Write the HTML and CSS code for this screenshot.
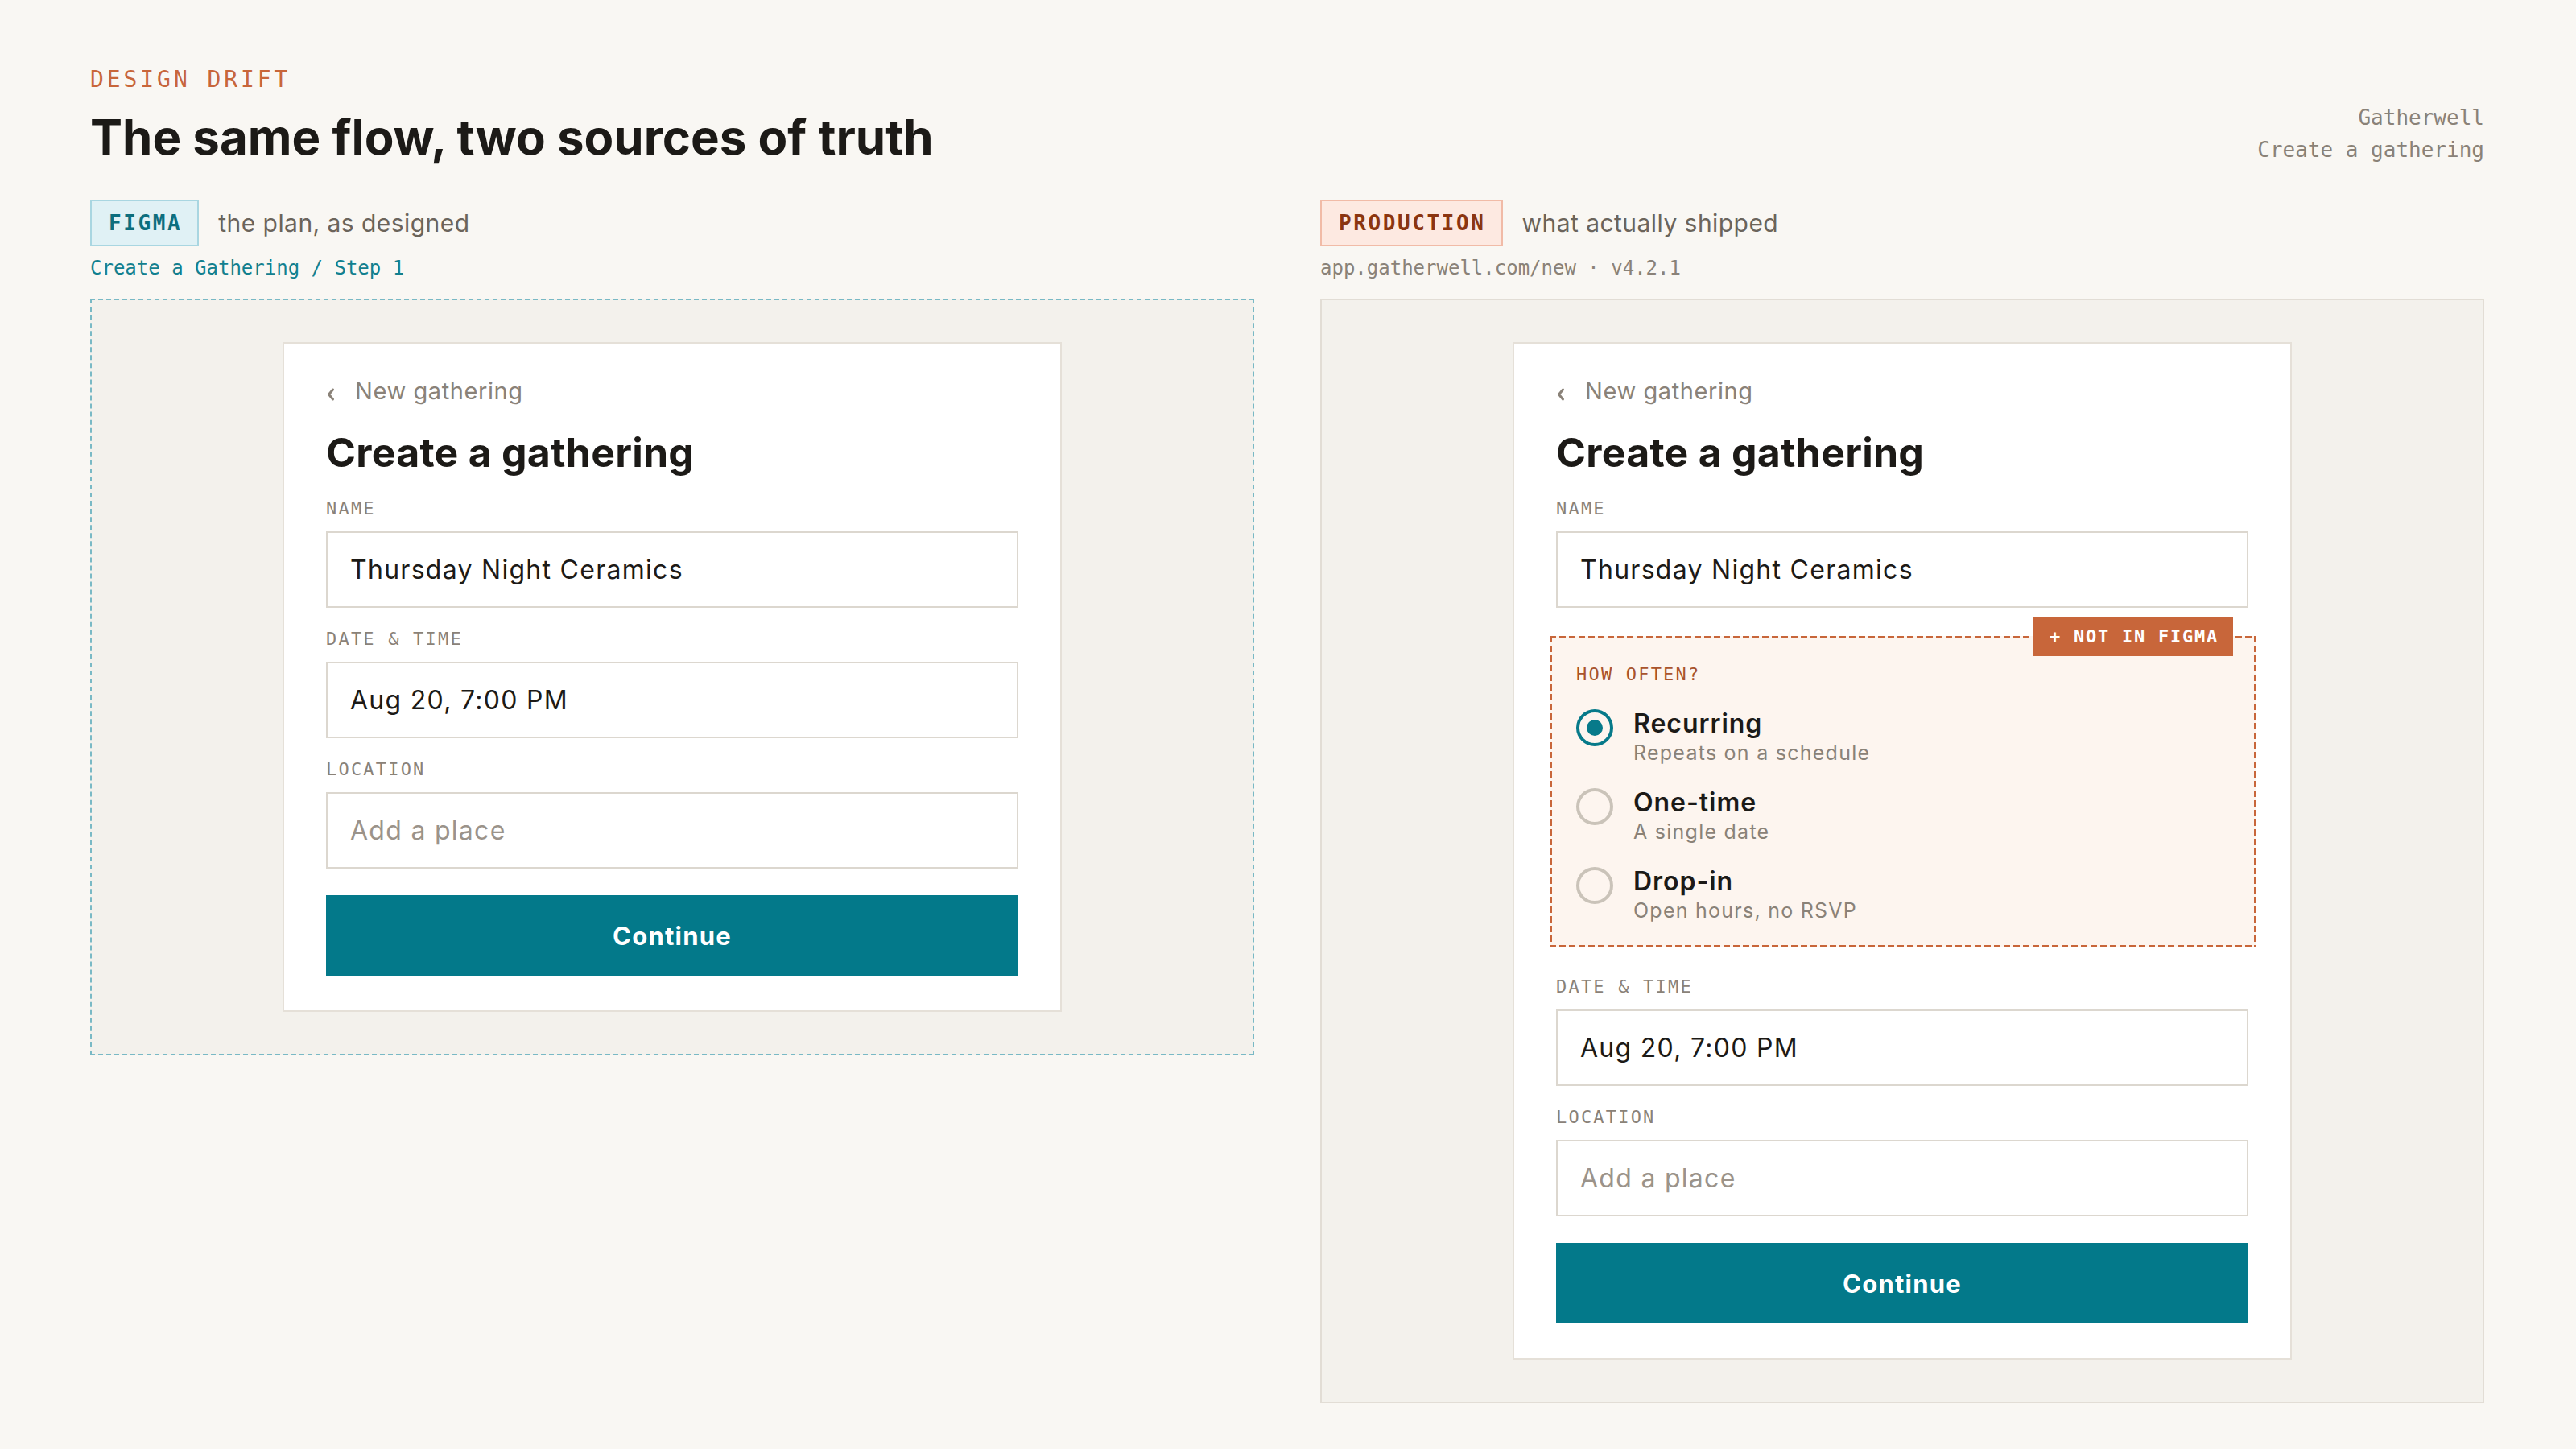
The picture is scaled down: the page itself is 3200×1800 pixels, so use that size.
FILE: index.html
```html
<!DOCTYPE html>
<html lang="en">
<head>
<meta charset="utf-8">
<title>Design drift — Create a gathering</title>
<link rel="stylesheet" href="styles.css">
</head>
<body>
<div class="page">
  <header class="top">
    <div class="top-main">
      <div class="eyebrow">Design drift</div>
      <h1 class="headline">The same flow, two sources of truth</h1>
    </div>
    <div class="meta">Gatherwell<br>Create a gathering</div>
  </header>

  <main class="compare">
    <!-- Design file -->
    <section class="column">
      <div class="source">
        <span class="tag tag-figma">FIGMA</span>
        <span class="source-note">the plan, as designed</span>
      </div>
      <div class="source-path path-figma">Create a Gathering / Step 1</div>
      <div class="stage stage-figma">
        <div class="screen">
          <div class="back">
            <svg class="back-icon" width="12" height="18" viewBox="0 0 12 18" aria-hidden="true"><path d="M8.5 3 L3.5 9 L8.5 15" fill="none" stroke="#8a8278" stroke-width="3" stroke-linecap="round" stroke-linejoin="round"/></svg>
            <span>New gathering</span>
          </div>
          <h2 class="screen-title">Create a gathering</h2>
          <div class="field">
            <div class="field-label">Name</div>
            <div class="input">Thursday Night Ceramics</div>
          </div>
          <div class="field">
            <div class="field-label">Date &amp; time</div>
            <div class="input">Aug 20, 7:00 PM</div>
          </div>
          <div class="field">
            <div class="field-label">Location</div>
            <div class="input input-empty">Add a place</div>
          </div>
          <button class="primary" type="button">Continue</button>
        </div>
      </div>
    </section>

    <!-- Live build -->
    <section class="column">
      <div class="source">
        <span class="tag tag-prod">PRODUCTION</span>
        <span class="source-note">what actually shipped</span>
      </div>
      <div class="source-path path-prod">app.gatherwell.com/new · v4.2.1</div>
      <div class="stage stage-prod">
        <div class="screen">
          <div class="back">
            <svg class="back-icon" width="12" height="18" viewBox="0 0 12 18" aria-hidden="true"><path d="M8.5 3 L3.5 9 L8.5 15" fill="none" stroke="#8a8278" stroke-width="3" stroke-linecap="round" stroke-linejoin="round"/></svg>
            <span>New gathering</span>
          </div>
          <h2 class="screen-title">Create a gathering</h2>
          <div class="field">
            <div class="field-label">Name</div>
            <div class="input">Thursday Night Ceramics</div>
          </div>

          <div class="extra">
            <span class="extra-flag">+ NOT IN FIGMA</span>
            <div class="field-label extra-label">How often?</div>
            <div class="options">
              <div class="option">
                <span class="radio radio-on"><span class="radio-dot"></span></span>
                <div class="option-text">
                  <div class="option-title">Recurring</div>
                  <div class="option-sub">Repeats on a schedule</div>
                </div>
              </div>
              <div class="option">
                <span class="radio"></span>
                <div class="option-text">
                  <div class="option-title">One-time</div>
                  <div class="option-sub">A single date</div>
                </div>
              </div>
              <div class="option">
                <span class="radio"></span>
                <div class="option-text">
                  <div class="option-title">Drop-in</div>
                  <div class="option-sub">Open hours, no RSVP</div>
                </div>
              </div>
            </div>
          </div>

          <div class="field">
            <div class="field-label">Date &amp; time</div>
            <div class="input">Aug 20, 7:00 PM</div>
          </div>
          <div class="field">
            <div class="field-label">Location</div>
            <div class="input input-empty">Add a place</div>
          </div>
          <button class="primary" type="button">Continue</button>
        </div>
      </div>
    </section>
  </main>
</div>
</body>
</html>
```

FILE: styles.css
```css
* {
  box-sizing: border-box;
}

html,
body {
  margin: 0;
  background: #f9f7f3;
}

body {
  font-family: Inter, "Noto Sans", sans-serif;
  color: #1c1a17;
}

.page {
  padding: 85px 114px 56px 112px;
}

/* ---------- header ---------- */
.top {
  display: flex;
  justify-content: space-between;
  align-items: flex-end;
}

.eyebrow {
  font-family: "DejaVu Sans Mono", "Liberation Mono", monospace;
  font-size: 28px;
  line-height: 28px;
  letter-spacing: 0.14em;
  text-transform: uppercase;
  color: #c8663a;
}

.headline {
  margin: 21px 0 0;
  font-size: 60px;
  line-height: 72px;
  font-weight: 700;
  color: #1c1a17;
}

.meta {
  font-family: "DejaVu Sans Mono", "Liberation Mono", monospace;
  font-size: 26px;
  line-height: 40px;
  color: #8a8278;
  text-align: right;
}

/* ---------- comparison columns ---------- */
.compare {
  margin-top: 42px;
  display: grid;
  grid-template-columns: 1fr 1fr;
  column-gap: 82px;
  align-items: start;
}

.source {
  display: flex;
  align-items: center;
  gap: 24px;
  height: 58px;
}

.tag {
  font-family: "DejaVu Sans Mono", "Liberation Mono", monospace;
  font-size: 26px;
  font-weight: 700;
  line-height: 32px;
  letter-spacing: 0.1em;
  padding: 11px 19px 11px 21px;
  border: 2px solid;
}

.tag-figma {
  background: #e0f1f5;
  border-color: #a9d6e1;
  color: #0d6e7e;
}

.tag-prod {
  background: #fde9e1;
  border-color: #f1bba7;
  color: #8b3510;
}

.source-note {
  font-size: 30px;
  letter-spacing: 0.015em;
  color: #6b645b;
}

.source-path {
  margin: 12px 0 23px;
  font-family: "DejaVu Sans Mono", "Liberation Mono", monospace;
  font-size: 24px;
  line-height: 30px;
}

.path-figma {
  color: #12808f;
}

.path-prod {
  color: #8a8278;
}

.stage {
  padding: 52px;
  background: #f3f1ec;
  border: 2px solid #e2ddd5;
}

.stage-figma {
  border: 2px dashed #79b9c5;
}

/* ---------- form screen ---------- */
.screen {
  width: 968px;
  margin: 0 auto;
  padding: 44px 52px 43px;
  background: #ffffff;
  border: 2px solid #e5e0d8;
}

.back {
  display: flex;
  align-items: center;
  height: 30px;
  font-size: 29px;
  line-height: 30px;
  letter-spacing: 0.02em;
  color: #8a8278;
}

.back-icon {
  margin: 8px 24px 0 0;
  flex: none;
}

.screen-title {
  margin: 31px 0 27px;
  font-size: 50px;
  line-height: 60px;
  font-weight: 700;
  letter-spacing: 0.005em;
  color: #1c1a17;
}

.field {
  margin-top: 26px;
}

.field-label {
  font-family: "DejaVu Sans Mono", "Liberation Mono", monospace;
  font-size: 22px;
  line-height: 26px;
  letter-spacing: 0.1em;
  text-transform: uppercase;
  color: #8a8278;
  margin-bottom: 15px;
}

.input {
  display: flex;
  align-items: center;
  height: 95px;
  padding: 0 28px;
  border: 2px solid #dcd7cf;
  background: #ffffff;
  font-size: 32px;
  letter-spacing: 0.04em;
  color: #1c1a17;
}

.input-empty {
  color: #9b938a;
}

.primary {
  display: block;
  width: 100%;
  height: 100px;
  margin-top: 33px;
  border: 0;
  background: #03798a;
  color: #ffffff;
  font-family: Inter, "Noto Sans", sans-serif;
  font-size: 31px;
  font-weight: 700;
  letter-spacing: 0.04em;
}

/* ---------- added block (production only) ---------- */
/* dashed outline drawn with gradients so the dash length can be set */
.extra {
  position: relative;
  margin: 35px -10px 36px -8px;
  padding: 35px 33px 30px;
  background:
    linear-gradient(90deg, #c8663a 66%, transparent 0) top left / 12px 3px repeat-x,
    linear-gradient(90deg, #c8663a 66%, transparent 0) bottom left / 12px 3px repeat-x,
    linear-gradient(180deg, #c8663a 66%, transparent 0) top left / 3px 12px repeat-y,
    linear-gradient(180deg, #c8663a 66%, transparent 0) top right / 3px 12px repeat-y,
    #fdf5ef;
}

.extra-flag {
  position: absolute;
  top: -24px;
  right: 29px;
  padding: 10px 18px 10px 20px;
  background: #c8663a;
  color: #ffffff;
  font-family: "DejaVu Sans Mono", "Liberation Mono", monospace;
  font-size: 22px;
  font-weight: 700;
  line-height: 29px;
  letter-spacing: 0.08em;
}

.extra-label {
  color: #a9532c;
  margin-bottom: 28px;
}

.options {
  display: flex;
  flex-direction: column;
  gap: 26px;
}

.option {
  display: flex;
  align-items: flex-start;
  gap: 25px;
}

.radio {
  flex: none;
  display: grid;
  place-items: center;
  width: 46px;
  height: 46px;
  margin-top: 2px;
  border-radius: 50%;
  border: 4px solid #cac3b9;
  background: transparent;
}

.radio-on {
  border-color: #077a8a;
}

.radio-dot {
  width: 20px;
  height: 20px;
  border-radius: 50%;
  background: #077a8a;
}

.option-title {
  font-size: 32px;
  line-height: 40px;
  font-weight: 600;
  letter-spacing: 0.03em;
  color: #1c1a17;
}

.option-sub {
  font-size: 25px;
  line-height: 32px;
  letter-spacing: 0.05em;
  color: #8a8278;
}
```
